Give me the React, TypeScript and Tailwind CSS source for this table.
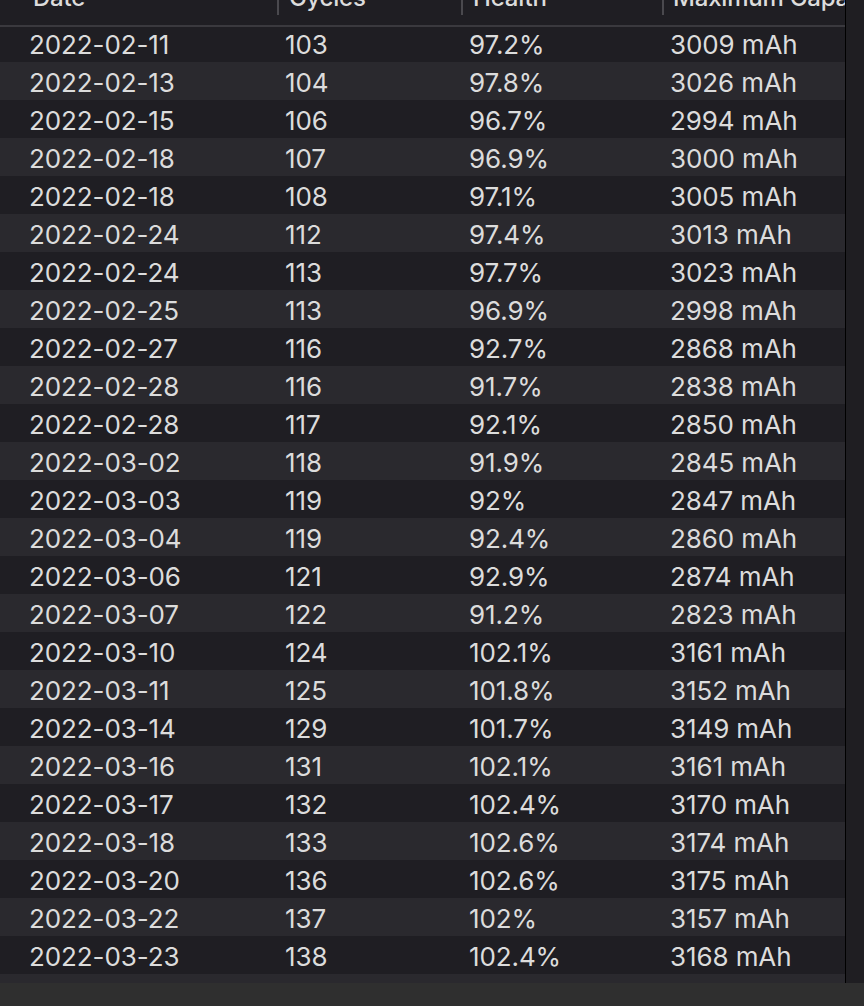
import React from "react";

const rows = [
  ["2022-02-11", "103", "97.2%", "3009 mAh"],
  ["2022-02-13", "104", "97.8%", "3026 mAh"],
  ["2022-02-15", "106", "96.7%", "2994 mAh"],
  ["2022-02-18", "107", "96.9%", "3000 mAh"],
  ["2022-02-18", "108", "97.1%", "3005 mAh"],
  ["2022-02-24", "112", "97.4%", "3013 mAh"],
  ["2022-02-24", "113", "97.7%", "3023 mAh"],
  ["2022-02-25", "113", "96.9%", "2998 mAh"],
  ["2022-02-27", "116", "92.7%", "2868 mAh"],
  ["2022-02-28", "116", "91.7%", "2838 mAh"],
  ["2022-02-28", "117", "92.1%", "2850 mAh"],
  ["2022-03-02", "118", "91.9%", "2845 mAh"],
  ["2022-03-03", "119", "92%", "2847 mAh"],
  ["2022-03-04", "119", "92.4%", "2860 mAh"],
  ["2022-03-06", "121", "92.9%", "2874 mAh"],
  ["2022-03-07", "122", "91.2%", "2823 mAh"],
  ["2022-03-10", "124", "102.1%", "3161 mAh"],
  ["2022-03-11", "125", "101.8%", "3152 mAh"],
  ["2022-03-14", "129", "101.7%", "3149 mAh"],
  ["2022-03-16", "131", "102.1%", "3161 mAh"],
  ["2022-03-17", "132", "102.4%", "3170 mAh"],
  ["2022-03-18", "133", "102.6%", "3174 mAh"],
  ["2022-03-20", "136", "102.6%", "3175 mAh"],
  ["2022-03-22", "137", "102%", "3157 mAh"],
  ["2022-03-23", "138", "102.4%", "3168 mAh"],
];

const headers = ["Date", "Cycles", "Health", "Maximum Capacity"];

export default function App() {
  return (
    <div
      className="w-[864px] h-[1006px] bg-[#1f1e23] text-[#dcdcdc] flex flex-col overflow-hidden"
      style={{ fontFamily: "Inter, 'Noto Sans', sans-serif" }}
    >
      <div className="flex h-[983px] overflow-hidden">
        <div className="w-[845px] flex flex-col overflow-hidden">
          {/* header */}
          <div className="relative z-10 h-[27px] -mb-[3px] shrink-0 bg-[#1f1e23] border-b-2 border-[#3a393e] flex text-[24px] font-medium leading-[24px] overflow-hidden">
            {headers.map((h, i) => (
              <div
                key={h}
                className={
                  "flex shrink-0 overflow-hidden whitespace-nowrap " +
                  (i === 0 ? "w-[277px] pl-[33px]" : i === 1 ? "w-[184px] pl-[10px] border-l-2 border-[#4a494e]" : i === 2 ? "w-[201px] pl-[10px] border-l-2 border-[#4a494e]" : "flex-1 pl-[9px] border-l-2 border-[#4a494e]")
                }
                style={{ borderImage: i === 0 ? undefined : "linear-gradient(to bottom, #4a494e 15px, transparent 15px) 1" }}
              >
                <span className="-mt-[14px] tracking-[-0.2px]">{h}</span>
              </div>
            ))}
          </div>
          {/* body */}
          <div className="flex flex-col text-[26px] leading-[26px] tracking-[-0.1px]">
            {rows.map((r, i) => (
              <div
                key={i}
                className={
                  "h-[38px] shrink-0 flex items-center pt-[3px] whitespace-nowrap " +
                  (i % 2 === 0 ? "bg-[#1f1e23]" : "bg-[#2a292e]")
                }
              >
                <div className="w-[277px] pl-[29px]">{r[0]}</div>
                <div className="w-[184px] pl-[8px]">{r[1]}</div>
                <div className="w-[201px] pl-[8px]">{r[2]}</div>
                <div className="flex-1 pl-[8px]">{r[3]}</div>
              </div>
            ))}
            <div className="h-[38px] shrink-0 bg-[#2a292e]" />
          </div>
        </div>
        <div className="flex-1 border-l border-black bg-[#1f1e22]" />
      </div>
      <div className="flex-1 bg-[#2f2f2f]" />
    </div>
  );
}
